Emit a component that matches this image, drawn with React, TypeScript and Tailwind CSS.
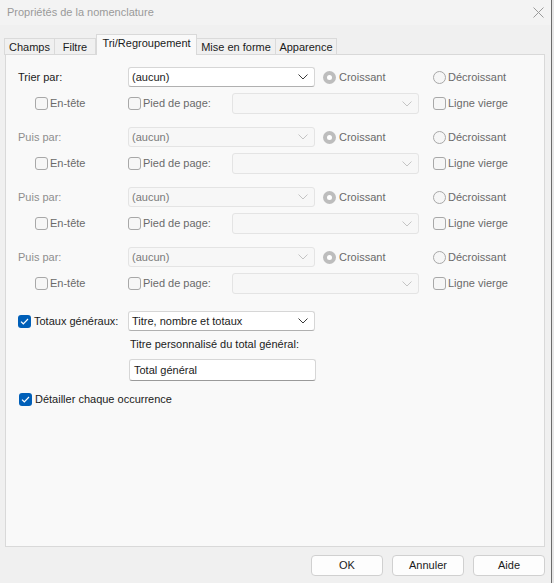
import React from "react";

const Chevron = ({ disabled }: { disabled?: boolean }) => (
  <svg width="10" height="6" viewBox="0 0 10 6" className="shrink-0">
    <path d="M0.5 0.5 L5 5 L9.5 0.5" fill="none" stroke={disabled ? "#c4c4c4" : "#3a3a3a"} strokeWidth="1" />
  </svg>
);

const Select = ({ value, disabled, w }: { value?: string; disabled?: boolean; w: string }) => (
  <div
    className={`${w} flex items-center justify-between pl-[3px] pr-[6px] rounded-[3px] border shrink-0 ${
      disabled ? "bg-[#f7f7f7] border-[#e4e4e4] text-[#7a7a7a]" : "bg-white border-[#d6d6d6] border-b-[#b0b0b0] text-[#1b1b1b]"
    }`}
  >
    <span>{value}</span>
    <Chevron disabled={disabled} />
  </div>
);

const Box = ({ checked }: { checked?: boolean }) =>
  checked ? (
    <span className="w-[13px] h-[13px] rounded-[3px] bg-[#005fb8] flex items-center justify-center shrink-0">
      <svg width="9" height="7" viewBox="0 0 9 7">
        <path d="M1 3.6 L3.3 5.8 L8 1" fill="none" stroke="white" strokeWidth="1.2" />
      </svg>
    </span>
  ) : (
    <span className="w-[13px] h-[13px] rounded-[3px] border border-[#a8a8a8] bg-[#f6f6f6] shrink-0" />
  );

const Radio = ({ on }: { on?: boolean }) =>
  on ? (
    <span className="w-[13px] h-[13px] rounded-full bg-[#bdbdbd] flex items-center justify-center shrink-0">
      <span className="w-[5px] h-[5px] rounded-full bg-white" />
    </span>
  ) : (
    <span className="w-[13px] h-[13px] rounded-full border border-[#a8a8a8] bg-[#f6f6f6] shrink-0" />
  );

const Group = ({ label, first }: { label: string; first?: boolean }) => (
  <div className="flex flex-col mb-[13px]">
    <div className="flex items-center h-[20px]">
      <div className={`w-[110px] shrink-0 ${first ? "text-[#1b1b1b]" : "text-[#8e8e8e]"}`}>{label}</div>
      <Select w="w-[187px] h-[20px]" value="(aucun)" disabled={!first} />
      <div className="w-[110px] shrink-0 flex items-center gap-[3px] ml-[8px] text-[#6a6a6a]">
        <Radio on />
        <span>Croissant</span>
      </div>
      <div className="flex items-center gap-[2px] text-[#6a6a6a]">
        <Radio />
        <span>Décroissant</span>
      </div>
    </div>
    <div className="flex items-center h-[21px] mt-[6px] text-[#6a6a6a]">
      <div className="w-[110px] shrink-0 pl-[17px] flex items-center gap-[2px]">
        <Box />
        <span>En-tête</span>
      </div>
      <div className="w-[104px] shrink-0 flex items-center gap-[2px]">
        <Box />
        <span>Pied de page:</span>
      </div>
      <Select w="w-[187px] h-[21px]" disabled />
      <div className="flex items-center gap-[2px] ml-[14px]">
        <Box />
        <span>Ligne vierge</span>
      </div>
    </div>
  </div>
);

const Tab = ({ label, active, w }: { label: string; active?: boolean; w: string }) =>
  active ? (
    <div className={`${w} h-[21px] bg-[#f9f9f9] border border-b-0 border-[#d9d9d9] flex items-start justify-center pt-[3px] relative z-10 text-[#1b1b1b]`}>
      {label}
    </div>
  ) : (
    <div className={`${w} h-[17px] mt-[4px] bg-[#f0f0f0] border border-b-0 border-[#dadada] flex items-center justify-center text-[#1b1b1b] -ml-px`}>
      {label}
    </div>
  );

const Button = ({ label }: { label: string }) => (
  <div className="w-[72px] h-[21px] rounded-[4px] border border-[#d0d0d0] bg-[#fdfdfd] flex items-center justify-center text-[#1b1b1b]">
    {label}
  </div>
);

export default function App() {
  return (
    <div
      className="w-[554px] h-[583px] bg-[#f0f0f0] flex flex-col relative overflow-hidden text-[11px] leading-none"
      style={{ fontFamily: '"Liberation Sans", Arial, sans-serif' }}
    >
      <div className="h-[25px] flex items-center justify-between pl-[7px] pr-[10px] bg-[#f3f3f3]">
        <span className="text-[11px] text-[#9a9a9a]">Propriétés de la nomenclature</span>
        <svg width="11" height="11" viewBox="0 0 11 11">
          <path d="M0.5 0.5 L10.5 10.5 M10.5 0.5 L0.5 10.5" stroke="#9a9a9a" strokeWidth="1" />
        </svg>
      </div>
      <div className="flex ml-[5px] mt-[9px] items-start">
        <Tab label="Champs" w="w-[51px]" />
        <Tab label="Filtre" w="w-[42px]" />
        <Tab label="Tri/Regroupement" w="w-[101px]" active />
        <Tab label="Mise en forme" w="w-[80px]" />
        <Tab label="Apparence" w="w-[62px]" />
      </div>
      <div className="ml-[5px] w-[540px] h-[493px] -mt-px border border-[#d9d9d9] bg-[#f9f9f9] pt-[12px] pl-[12px] flex flex-col">
        <Group label="Trier par:" first />
        <Group label="Puis par:" />
        <Group label="Puis par:" />
        <Group label="Puis par:" />
        <div className="flex items-center h-[20px] mt-[4px] text-[#1b1b1b]">
          <div className="w-[110px] shrink-0 flex items-center gap-[3px]">
            <Box checked />
            <span>Totaux généraux:</span>
          </div>
          <Select w="w-[187px] h-[20px]" value="Titre, nombre et totaux" />
        </div>
        <div className="ml-[112px] mt-[8px] text-[#1b1b1b]">Titre personnalisé du total général:</div>
        <div className="ml-[111px] mt-[9px] w-[187px] h-[22px] bg-white border border-[#d6d6d6] border-b-[#9a9a9a] rounded-[3px] flex items-center pl-[4px] text-[#1b1b1b]">
          Total général
        </div>
        <div className="flex items-center gap-[3px] ml-[1px] mt-[12px] text-[#1b1b1b]">
          <Box checked />
          <span>Détailler chaque occurrence</span>
        </div>
      </div>
      <div className="flex justify-end gap-[9px] mt-[8px] pr-[9px]">
        <Button label="OK" />
        <Button label="Annuler" />
        <Button label="Aide" />
      </div>
      <div className="absolute right-0 top-0 w-[3px] h-full bg-[#e6e6e6] border-l border-[#6b6b6b]" />
    </div>
  );
}
